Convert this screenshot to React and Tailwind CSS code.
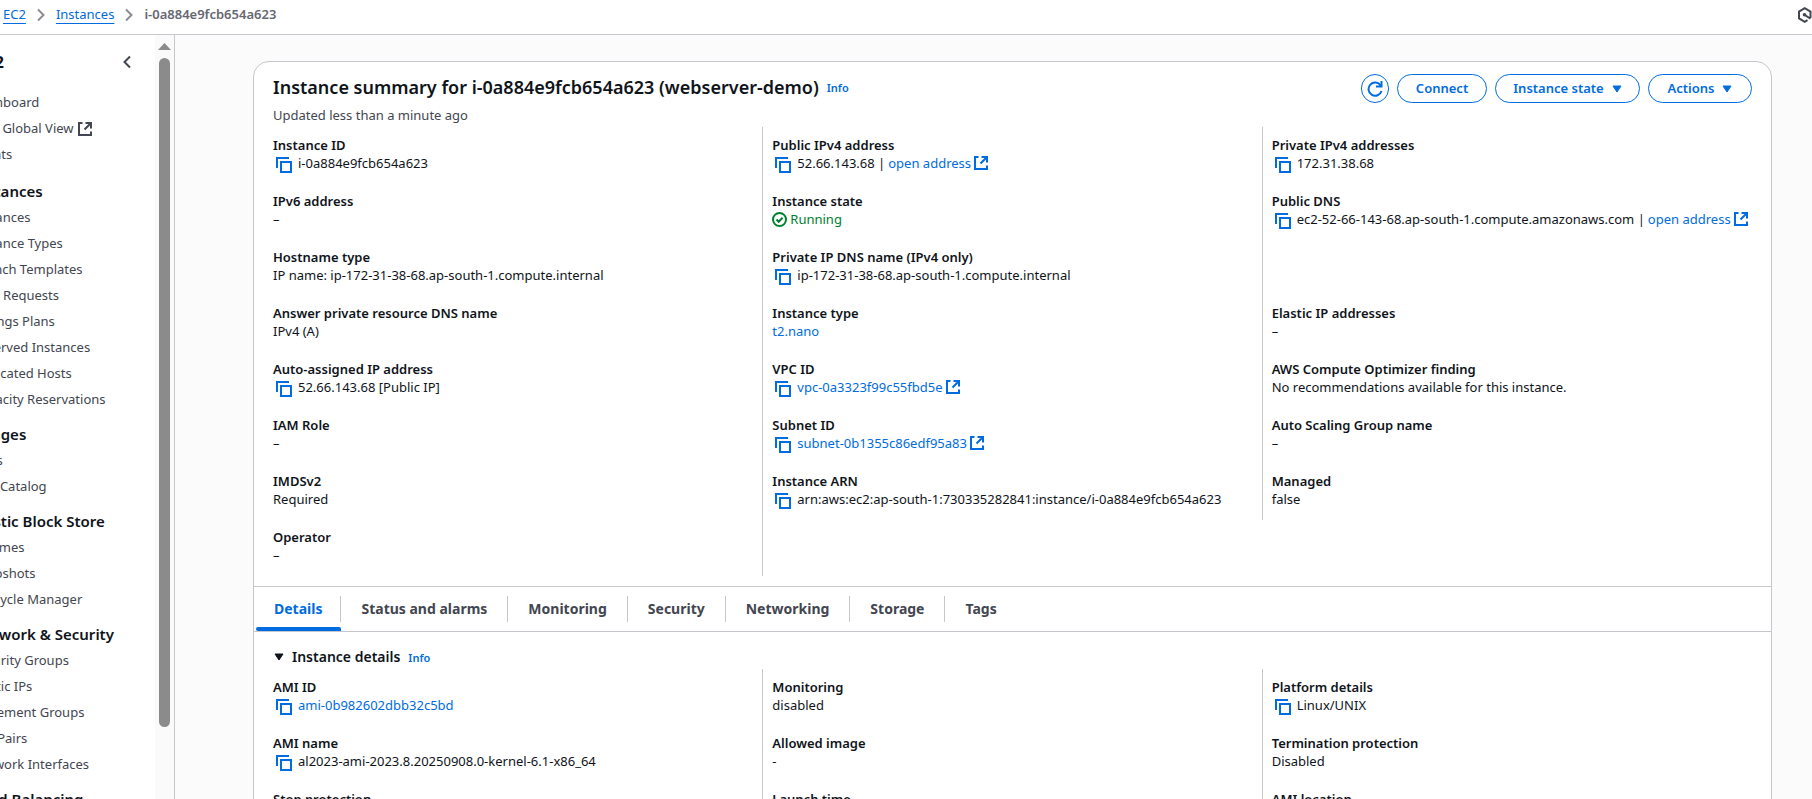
const NAV = [
  { items: ["Dashboard", "AWS Global View", "Events"], external: "AWS Global View" },
  {
    title: "Instances",
    items: [
      "Instances",
      "Instance Types",
      "Launch Templates",
      "Spot Requests",
      "Savings Plans",
      "Reserved Instances",
      "Dedicated Hosts",
      "Capacity Reservations",
    ],
  },
  { title: "Images", items: ["AMIs", "AMI Catalog"] },
  { title: "Elastic Block Store", items: ["Volumes", "Snapshots", "Lifecycle Manager"] },
  {
    title: "Network & Security",
    items: ["Security Groups", "Elastic IPs", "Placement Groups", "Key Pairs", "Network Interfaces"],
  },
  { title: "Load Balancing", items: ["Load Balancers"] },
];

const SUMMARY = [
  [
    { label: "Instance ID", copy: true, text: "i-0a884e9fcb654a623" },
    { label: "IPv6 address", text: "–" },
    { label: "Hostname type", text: "IP name: ip-172-31-38-68.ap-south-1.compute.internal" },
    { label: "Answer private resource DNS name", text: "IPv4 (A)" },
    { label: "Auto-assigned IP address", copy: true, text: "52.66.143.68 [Public IP]" },
    { label: "IAM Role", text: "–" },
    { label: "IMDSv2", text: "Required" },
    { label: "Operator", text: "–" },
  ],
  [
    { label: "Public IPv4 address", copy: true, text: "52.66.143.68 |", link: "open address", external: true },
    { label: "Instance state", status: "Running" },
    { label: "Private IP DNS name (IPv4 only)", copy: true, text: "ip-172-31-38-68.ap-south-1.compute.internal" },
    { label: "Instance type", link: "t2.nano" },
    { label: "VPC ID", copy: true, link: "vpc-0a3323f99c55fbd5e", external: true },
    { label: "Subnet ID", copy: true, link: "subnet-0b1355c86edf95a83", external: true },
    { label: "Instance ARN", copy: true, text: "arn:aws:ec2:ap-south-1:730335282841:instance/i-0a884e9fcb654a623" },
  ],
  [
    { label: "Private IPv4 addresses", copy: true, text: "172.31.38.68" },
    {
      label: "Public DNS",
      copy: true,
      text: "ec2-52-66-143-68.ap-south-1.compute.amazonaws.com |",
      link: "open address",
      external: true,
    },
    null,
    { label: "Elastic IP addresses", text: "–" },
    { label: "AWS Compute Optimizer finding", text: "No recommendations available for this instance." },
    { label: "Auto Scaling Group name", text: "–" },
    { label: "Managed", text: "false" },
  ],
];

const DETAILS = [
  [
    { label: "AMI ID", copy: true, link: "ami-0b982602dbb32c5bd" },
    { label: "AMI name", copy: true, text: "al2023-ami-2023.8.20250908.0-kernel-6.1-x86_64" },
    { label: "Stop protection", text: "Disabled" },
  ],
  [
    { label: "Monitoring", text: "disabled" },
    { label: "Allowed image", text: "-" },
    { label: "Launch time", text: "-" },
  ],
  [
    { label: "Platform details", copy: true, text: "Linux/UNIX" },
    { label: "Termination protection", text: "Disabled" },
    { label: "AMI location", text: "-" },
  ],
];

const TABS = ["Details", "Status and alarms", "Monitoring", "Security", "Networking", "Storage", "Tags"];

function CopyIcon() {
  return (
    <svg width="16" height="16" viewBox="0 0 16 16" fill="none" stroke="currentColor" strokeWidth="2" aria-hidden="true">
      <path d="M1 11V1h12" />
      <path d="M5 5h10v10H5z" />
    </svg>
  );
}

function ExternalIcon() {
  return (
    <svg className="shrink-0" width="14" height="14" viewBox="0 0 14 14" fill="none" stroke="currentColor" strokeWidth="2" aria-hidden="true">
      <path d="M4.5 1H1v12h12V9.5" />
      <path d="M7.5 1H13v5.500M12.500 1.500 6.500 7.500" />
    </svg>
  );
}

function CheckIcon() {
  return (
    <svg className="shrink-0" width="15" height="15" viewBox="0 0 15 15" fill="none" stroke="currentColor" strokeWidth="2" aria-hidden="true">
      <circle cx="7.5" cy="7.5" r="6.5" />
      <path d="m4.5 7.5 2.2 2.2 3.8-4" />
    </svg>
  );
}

function Caret() {
  return (
    <svg width="10" height="8" viewBox="0 0 10 8" fill="currentColor" stroke="currentColor" strokeLinejoin="round" aria-hidden="true">
      <path d="M1 1h8L5 7z" />
    </svg>
  );
}

function Chevron({ flip, className }) {
  return (
    <svg className={className} width="8" height="14" viewBox="0 0 8 14" fill="none" stroke="currentColor" strokeWidth="2" aria-hidden="true">
      <path d={flip ? "M7 1.5 1.5 7 7 12.5" : "M1 1.5 6.5 7 1 12.5"} />
    </svg>
  );
}

function Field({ field }) {
  if (!field) return <div className="h-9" />;
  return (
    <div className="text-[13px]">
      <dt className="h-5 leading-5 font-semibold whitespace-nowrap">{field.label}</dt>
      <dd className="flex h-4 items-center gap-[3px] leading-4 whitespace-nowrap">
        {field.copy && (
          <button type="button" aria-label={`Copy ${field.label}`} className="mx-[3px] mt-1 shrink-0 text-[#006ce0]">
            <CopyIcon />
          </button>
        )}
        {field.status && (
          <span className="flex items-center gap-[3px] text-[#00802f]">
            <CheckIcon />
            {field.status}
          </span>
        )}
        {field.text && <span>{field.text}</span>}
        {field.link && (
          <a href="#" className="flex items-center gap-[3px] text-[#006ce0]">
            {field.link}
            {field.external && <ExternalIcon />}
          </a>
        )}
      </dd>
    </div>
  );
}

function FieldColumns({ columns }) {
  return (
    <div className="grid grid-cols-[minmax(0,489fr)_minmax(0,499fr)_minmax(0,490fr)]">
      {columns.map((fields, i) => (
        <dl
          key={i}
          className={`flex flex-col gap-5 pt-2 pb-[13px] ${i > 0 ? "border-l border-[#c6c6cd] pl-[9px]" : ""} ${
            i === 2 ? "self-start" : ""
          }`}
        >
          {fields.map((field, j) => (
            <Field key={j} field={field} />
          ))}
        </dl>
      ))}
    </div>
  );
}

function Pill({ children, menu, className }) {
  return (
    <button
      type="button"
      className={`flex h-[29px] items-center justify-center gap-2 rounded-full border border-[#006ce0] text-[13px] font-semibold text-[#006ce0] ${className}`}
    >
      {children}
      {menu && <Caret />}
    </button>
  );
}

function Sidebar() {
  return (
    <aside className="flex w-[175px] shrink-0 border-r border-[#c6c6cd] bg-white">
      <div className="min-w-0 flex-1 overflow-hidden">
        <div className="-ml-7 pt-[9px]">
          <div className="flex h-9 items-center justify-between pr-6">
            <h2 className="w-8 text-right text-base leading-6 font-bold">EC2</h2>
            <button type="button" aria-label="Close navigation" className="text-[#424650]">
              <Chevron flip />
            </button>
          </div>
          <nav className="mt-1 flex flex-col gap-[7px]">
            {NAV.map((group, i) => (
              <section key={i}>
                {group.title && (
                  <h3 className="flex h-7 items-center text-[15px] font-semibold whitespace-nowrap">{group.title}</h3>
                )}
                <ul className={i === 0 ? "pt-[6px] pb-[2px]" : ""}>
                  {group.items.map((item) => (
                    <li key={item} className="h-[26px]">
                      <a href="#" className="flex h-[26px] items-center gap-1 text-[13px] whitespace-nowrap text-[#424650]">
                        {item}
                        {group.external === item && <ExternalIcon />}
                      </a>
                    </li>
                  ))}
                </ul>
              </section>
            ))}
          </nav>
        </div>
      </div>
      <div className="flex w-[19px] flex-col items-center bg-[#fafafa] pt-2" aria-hidden="true">
        <svg width="13" height="7" viewBox="0 0 13 7" fill="#8b8b8b">
          <path d="M6.5 0 13 7H0z" />
        </svg>
        <div className="mt-2 h-[88.5%] w-[11px] rounded-full bg-[#8b8b8b]" />
      </div>
    </aside>
  );
}

export default function App() {
  return (
    <div className="flex h-screen flex-col overflow-hidden bg-white font-['Noto_Sans',sans-serif] text-[#0f141a]">
      <header className="flex h-[35px] shrink-0 items-center justify-between border-b border-[#c6c6cd] pb-1 pl-[3px] text-[13px]">
        <nav aria-label="Breadcrumb" className="flex items-center">
          <a href="#" className="text-[#006ce0] underline underline-offset-4">EC2</a>
          <Chevron className="mx-[11px] text-[#8c8c94]" />
          <a href="#" className="text-[#006ce0] underline underline-offset-4">Instances</a>
          <Chevron className="mx-[11px] text-[#8c8c94]" />
          <span className="font-semibold text-[#656871]">i-0a884e9fcb654a623</span>
        </nav>
        <button type="button" aria-label="Open tools panel" className="text-[#424650]">
          <svg width="15" height="16" viewBox="0 0 15 16" fill="none" stroke="currentColor" strokeWidth="2">
            <path d="M13.500 11V4.600L7.700 1.200 2 4.600v6.800l5.700 3.400 2.800-1.700" />
            <path d="m7.700 8 5.800 3.600" />
            <circle cx="7.500" cy="7.800" r="1.800" fill="currentColor" stroke="none" />
          </svg>
        </button>
      </header>

      <div className="flex min-h-0 flex-1">
        <Sidebar />
        <main className="min-w-0 flex-1 overflow-hidden bg-[#fbfbfb] pt-[26px] pr-10 pl-[78px]">
          <div className="rounded-t-2xl border border-[#c6c6cd] bg-white">
            <section className="px-[19px] pt-3">
              <div className="flex items-start justify-between">
                <div>
                  <div className="flex h-[25px] items-center gap-2">
                    <h1 className="text-lg leading-6 font-semibold whitespace-nowrap">
                      Instance summary for i-0a884e9fcb654a623 (webserver-demo)
                    </h1>
                    <a href="#" className="pt-1 text-[11px] font-semibold text-[#006ce0]">Info</a>
                  </div>
                  <p className="pt-[6px] text-[13px] leading-5 text-[#424650]">Updated less than a minute ago</p>
                </div>
                <div className="flex gap-2">
                  <button
                    type="button"
                    aria-label="Refresh"
                    className="flex h-[29px] w-7 items-center justify-center rounded-full border border-[#006ce0] text-[#006ce0]"
                  >
                    <svg width="16" height="16" viewBox="0 0 16 16" fill="none" stroke="currentColor" strokeWidth="2" aria-hidden="true">
                      <path d="M14.5 10A6.6 6.6 0 1 1 13.7 4.6" />
                      <path d="M14.5 0v5.5H9" />
                    </svg>
                  </button>
                  <Pill className="w-[90px]">Connect</Pill>
                  <Pill menu className="w-[145px]">Instance state</Pill>
                  <Pill menu className="w-[104px]">Actions</Pill>
                </div>
              </div>
              <div className="pt-[2px] pb-[10px]">
                <FieldColumns columns={SUMMARY} />
              </div>
            </section>

            <div role="tablist" className="flex h-[46px] border-t border-b border-[#c6c6cd] pl-[2px]">
              {TABS.map((tab, i) => (
                <button
                  key={tab}
                  type="button"
                  role="tab"
                  aria-selected={i === 0}
                  className={`flex flex-col whitespace-nowrap ${i === 0 ? "text-[#006ce0]" : "text-[#424650]"}`}
                >
                  <span
                    className={`mt-[9px] flex h-[26px] items-center text-sm font-bold ${i === 0 ? "pl-[18px]" : "pl-5"} ${
                      i === TABS.length - 1 ? "" : i === 0 ? "border-r border-[#c6c6cd] pr-[18px]" : "border-r border-[#c6c6cd] pr-5"
                    }`}
                  >
                    {tab}
                  </span>
                  {i === 0 && <span className="mt-[5px] h-1 w-full rounded-t-sm rounded-bl-sm bg-[#006ce0]" />}
                </button>
              ))}
            </div>

            <section className="px-[19px] pt-[13px]">
              <div className="flex h-6 items-center">
                <button type="button" className="flex items-center gap-2 pl-[1px] text-sm font-semibold">
                  <Caret />
                  Instance details
                </button>
                <a href="#" className="pt-[2px] pl-2 text-[11px] font-semibold text-[#006ce0]">Info</a>
              </div>
              <FieldColumns columns={DETAILS} />
            </section>
          </div>
        </main>
      </div>
    </div>
  );
}
